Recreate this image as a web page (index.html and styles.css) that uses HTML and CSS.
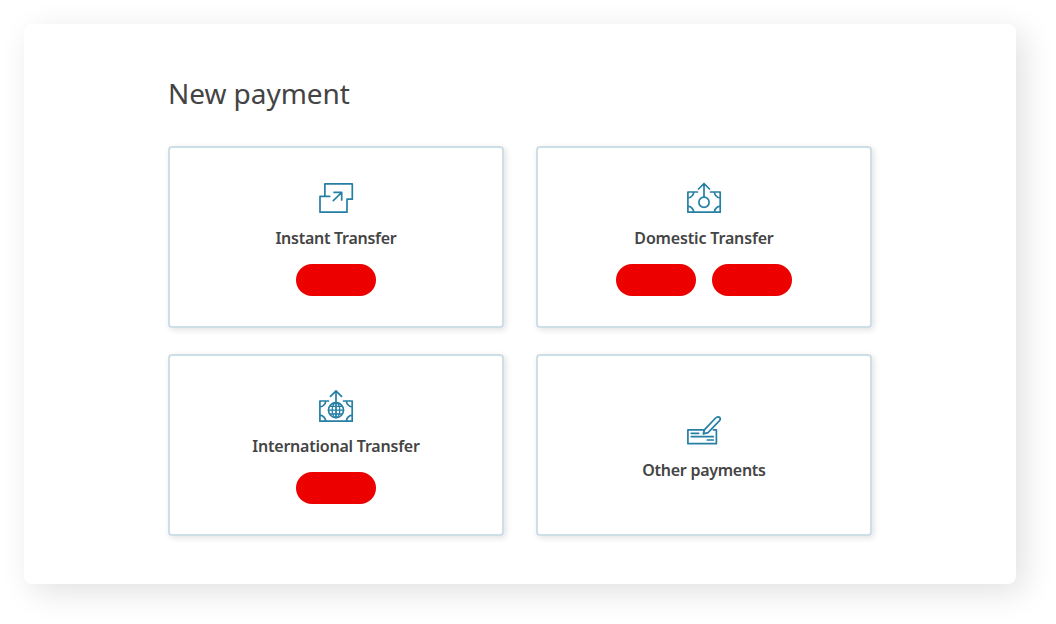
FILE: index.html
```html
<!DOCTYPE html>
<html lang="en">
<head>
<meta charset="utf-8">
<title>New payment</title>
<link rel="stylesheet" href="styles.css">
</head>
<body>
<main class="panel">
  <h1 class="title">New payment</h1>
  <div class="grid">
    <section class="card">
      <svg class="icon" viewBox="0 0 40 40"><path d="M13.7 18.4H4V34.2H31V21.2H36.3V5.9H8.9V18.4M17.3 22.7L25.5 14.5M18 14.3H25.7V22"/></svg>
      <h2 class="label instant">Instant Transfer</h2>
      <div class="actions"><button class="pill" aria-label="Instant"></button></div>
    </section>
    <section class="card">
      <svg class="icon" viewBox="0 0 40 40"><path d="M13.5 14H3.9V34.2H36.2V14H26.5M20 19.2V5.6M14.5 11L20 5.5L25.5 11M3.9 20C7 19.5 9.3 17.5 9.8 14M36.2 20C33 19.5 30.8 17.5 30.3 14M3.9 28.2C7 28.7 9.3 30.7 9.8 34.2M36.2 28.2C33 28.7 30.8 30.7 30.3 34.2"/><circle cx="20" cy="24.3" r="5.1"/></svg>
      <h2 class="label domestic">Domestic Transfer</h2>
      <div class="actions"><button class="pill" aria-label="Domestic"></button><button class="pill" aria-label="Domestic scheduled"></button></div>
    </section>
    <section class="card">
      <svg class="icon" viewBox="0 0 40 40"><path d="M12.5 15H3.9V35.2H36.2V15H27.5M20 31.5V4.8M14.5 10.3L20 4.8L25.5 10.3M3.9 21C7 20.5 9.3 18.5 9.8 15M36.2 21C33 20.5 30.8 18.5 30.3 15M3.9 29.2C7 29.7 9.3 31.7 9.8 35.2M36.2 29.2C33 29.7 30.8 31.7 30.3 35.2"/><path class="thin" d="M12.4 24.2H27.6M13.8 20.4H26.2M13.8 28H26.2"/><circle cx="20" cy="24.2" r="7.5"/><ellipse class="thin" cx="20" cy="24.2" rx="3.8" ry="7.5"/></svg>
      <h2 class="label international">International Transfer</h2>
      <div class="actions"><button class="pill" aria-label="International"></button></div>
    </section>
    <section class="card card-simple">
      <svg class="icon" viewBox="0 0 40 40"><path d="M19.5 19.9H3.9V33.7H32.4V19.9H29.5M7.3 23.3H14.7M7.3 26.7H29.3M23.3 30H29.3M19.2 23.9L20.6 19.6L31.6 8C33.2 6.4 35 6.6 35.8 7.6C36.6 8.6 36.3 10 35.1 11.2L24 22.6Z"/></svg>
      <h2 class="label other">Other payments</h2>
    </section>
  </div>
</main>
</body>
</html>
```
FILE: styles.css
```css
* { box-sizing: border-box; }
body {
  margin: 0;
  padding: 24px 40px 40px 24px;
  background: #fff;
  color: #444;
  font-family: "Noto Sans", "Open Sans", sans-serif;
}
.panel {
  height: 560px;
  padding: 47px 144px 48px;
  border-radius: 8px;
  background: #fff;
  box-shadow: 8px 8px 32px rgba(0, 0, 0, 0.12);
}
.title {
  margin: 0 0 31px;
  font-size: 28px;
  line-height: 44px;
  font-weight: 400;
  letter-spacing: -0.05px;
  white-space: nowrap;
}
.grid {
  display: grid;
  grid-template-columns: 336px 336px;
  grid-auto-rows: 182px;
  gap: 26px 32px;
}
.card {
  display: flex;
  flex-direction: column;
  align-items: center;
  justify-content: center;
  border: 2px solid #cedee7;
  border-radius: 4px;
  background: #fff;
  box-shadow: 2px 2px 6px rgba(0, 0, 0, 0.12);
}
.card-simple { padding-top: 2px; }
.icon {
  width: 40px;
  height: 40px;
  fill: none;
  stroke: #257fa4;
  stroke-width: 1.7;
  stroke-linecap: round;
  stroke-linejoin: round;
}
.thin { stroke-width: 1.3; }
.label {
  margin: 8px 0 0;
  font-size: 16px;
  line-height: 24px;
  font-weight: 600;
  white-space: nowrap;
}
.instant { letter-spacing: -0.27px; }
.domestic { letter-spacing: -0.16px; }
.international { letter-spacing: -0.22px; }
.other { letter-spacing: -0.27px; }
.actions {
  display: flex;
  gap: 16px;
  margin-top: 14px;
}
.pill {
  width: 80px;
  height: 32px;
  padding: 0;
  border: 0;
  border-radius: 16px;
  background: #ec0000;
}
```
